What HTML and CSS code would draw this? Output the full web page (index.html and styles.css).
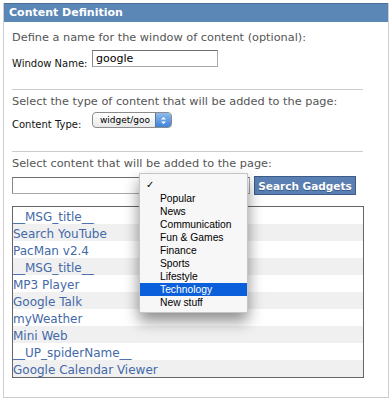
FILE: index.html
```html
<!DOCTYPE html>
<html lang="en">
<head>
  <meta charset="UTF-8" />
  <title>Content Definition</title>
  <link rel="stylesheet" href="styles.css">
</head>
<body>
  <div class="panel">
    <div class="panel-head">Content Definition</div>
    <div class="panel-body">
      <div class="section">
        <p class="hint">Define a name for the window of content (optional):</p>
        <div class="field">
          <label class="label">Window Name:</label>
          <input class="text-input name-input" type="text" value="google" />
        </div>
      </div>

      <div class="section">
        <p class="hint">Select the type of content that will be added to the page:</p>
        <div class="field type-field">
          <label class="label">Content Type:</label>
          <div class="mac-select">
            <span class="mac-select-text">widget/goo</span>
            <span class="mac-select-arrows">
              <svg width="7" height="9" viewBox="0 0 7 9"><path d="M1 3.5 L3.5 1 L6 3.5 Z M1 5.5 L3.5 8 L6 5.5 Z" fill="#fff"/></svg>
            </span>
          </div>
        </div>
      </div>

      <div class="section last">
        <p class="hint">Select content that will be added to the page:</p>
        <div class="search-row">
          <input class="text-input search-input" type="text" />
          <button class="search-btn">Search Gadgets</button>

          <ul class="popup">
            <li class="checked">&#10003;</li>
            <li>Popular</li>
            <li>News</li>
            <li>Communication</li>
            <li>Fun &amp; Games</li>
            <li>Finance</li>
            <li>Sports</li>
            <li>Lifestyle</li>
            <li class="active">Technology</li>
            <li>New stuff</li>
          </ul>
        </div>

        <ul class="gadget-list">
          <li><a href="#">__MSG_title__</a></li>
          <li><a href="#">Search YouTube</a></li>
          <li><a href="#">PacMan v2.4</a></li>
          <li><a href="#">__MSG_title__</a></li>
          <li><a href="#">MP3 Player</a></li>
          <li><a href="#">Google Talk</a></li>
          <li><a href="#">myWeather</a></li>
          <li><a href="#">Mini Web</a></li>
          <li><a href="#">__UP_spiderName__</a></li>
          <li><a href="#">Google Calendar Viewer</a></li>
        </ul>
      </div>
    </div>
  </div>
</body>
</html>
```

FILE: styles.css
```css
body {
  margin: 0;
  background-color: #ffffff;
  font-family: "DejaVu Sans", Verdana, sans-serif;
  color: #555;
}

.panel {
  margin: 3px;
  width: 384px;
  height: 394px;
  border: 1px solid #cfcfcf;
  border-top: none;
}

.panel-head {
  background-color: #5a87b6;
  border-top: 1px solid #4a6f99;
  color: #fff;
  font-weight: bold;
  font-size: 11px;
  height: 18px;
  line-height: 18px;
  padding-left: 5px;
}

.panel-body {
  padding: 0 25px 0 8px;
}

.section {
  border-bottom: 1px solid #cccccc;
  padding: 9px 0 22px;
}

.section + .section {
  padding: 5px 0 23px;
}

.section.last {
  border-bottom: none;
  padding-bottom: 0;
}

.hint {
  margin: 0;
  font-size: 11.3px;
  line-height: 14px;
  white-space: nowrap;
}

.field {
  display: flex;
  align-items: flex-end;
  margin-top: 5px;
}

.type-field {
  margin-top: 3px;
}

.label {
  flex-shrink: 0;
  color: #111;
  font-size: 10px;
  width: 80px;
  line-height: 13px;
  white-space: nowrap;
  margin-bottom: -3px;
}

.text-input {
  border: 1px solid #a9a9a9;
  border-top-color: #6f6f6f;
  border-left-color: #8a8a8a;
  font-family: "DejaVu Sans", Verdana, sans-serif;
  font-size: 11px;
  color: #000;
  padding: 0 3px;
  box-sizing: border-box;
  outline: none;
}

.name-input {
  width: 126px;
  height: 17px;
}

.mac-select {
  display: flex;
  align-items: center;
  width: 80px;
  height: 16px;
  border: 1px solid #8c8c8c;
  border-radius: 4px;
  background: linear-gradient(#ffffff, #e8e8e8);
  overflow: hidden;
  box-sizing: border-box;
}

.mac-select-text {
  flex: 1;
  font-size: 9px;
  color: #000;
  text-align: center;
  padding-left: 2px;
  overflow: hidden;
  white-space: nowrap;
}

.mac-select-arrows {
  width: 15px;
  height: 14px;
  display: flex;
  align-items: center;
  justify-content: center;
  background: linear-gradient(#8fbbea, #3d82db);
  border-left: 1px solid #5a78a6;
}

.search-row {
  position: relative;
  display: flex;
  align-items: center;
  margin-top: 5px;
  height: 19px;
}

.search-input {
  width: 238px;
  height: 17px;
}

.search-btn {
  margin-left: 4px;
  width: 102px;
  height: 19px;
  padding: 0;
  background-color: #5a80b3;
  border: 1px solid #3b5b88;
  color: #fff;
  font-family: "DejaVu Sans", Verdana, sans-serif;
  font-size: 10.5px;
  font-weight: bold;
  white-space: nowrap;
  text-shadow: 0 1px 0 #3b5b88;
  cursor: pointer;
}

.popup {
  position: absolute;
  left: 127px;
  top: -3px;
  width: 109px;
  margin: 0;
  padding: 4px 0 3px;
  list-style: none;
  background-color: #f7f7f7;
  border: 1px solid #c6c6c6;
  box-sizing: border-box;
  box-shadow: 0 8px 14px rgba(0, 0, 0, 0.45);
  font-family: "Liberation Sans", Arial, sans-serif;
  font-size: 10.3px;
  color: #000;
  z-index: 2;
}

.popup li {
  height: 13px;
  line-height: 13px;
  padding-left: 20px;
}

.popup li.checked {
  padding-left: 6px;
  height: 14px;
  line-height: 14px;
  font-size: 10px;
}

.popup li.active {
  background-color: #0b5fdb;
  color: #fff;
}

.gadget-list {
  list-style: none;
  margin: 11px 0 0;
  padding: 0;
  width: 350px;
  border: 1px solid #666;
}

.gadget-list li {
  height: 17px;
  line-height: 17px;
  background-color: #fff;
}

.gadget-list li:nth-child(even) {
  background-color: #f0f0f0;
}

.gadget-list a {
  color: #4469a8;
  text-decoration: none;
  font-size: 12px;
}
```
